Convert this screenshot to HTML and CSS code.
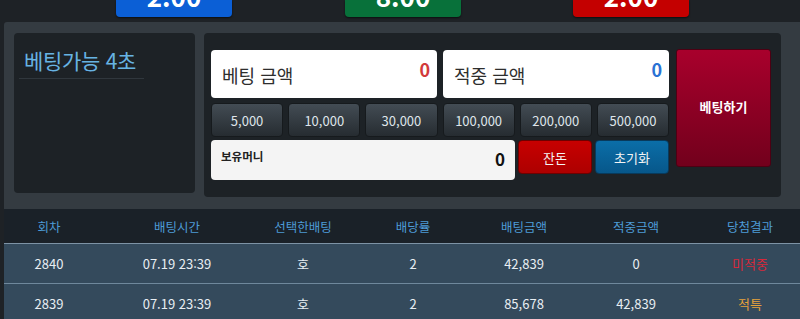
FILE: index.html
```html
<!DOCTYPE html>
<html lang="ko">
<head>
<meta charset="utf-8">
<link rel="stylesheet" href="styles.css">
</head>
<body>
<div class="top">
  <div class="odd odd-blue"><span>2.00</span></div>
  <div class="odd odd-green"><span>8.00</span></div>
  <div class="odd odd-red"><span>2.00</span></div>
</div>
<div class="panel">
  <div class="timer">
    <div class="timer-title">베팅가능 4초</div>
  </div>
  <div class="betbox">
    <div class="bet-left">
      <div class="amounts">
        <div class="amount"><span class="amount-label">베팅 금액</span><span class="amount-val red">0</span></div>
        <div class="amount"><span class="amount-label">적중 금액</span><span class="amount-val blue">0</span></div>
      </div>
      <div class="chips">
        <button class="chip">5,000</button>
        <button class="chip">10,000</button>
        <button class="chip">30,000</button>
        <button class="chip">100,000</button>
        <button class="chip">200,000</button>
        <button class="chip">500,000</button>
      </div>
      <div class="money-row">
        <div class="money"><span class="money-label">보유머니</span><span class="money-val">0</span></div>
        <button class="act act-red">잔돈</button>
        <button class="act act-blue">초기화</button>
      </div>
    </div>
    <button class="bet-btn">베팅하기</button>
  </div>
</div>
<div class="table">
  <div class="trow thead">
    <div>회차</div><div>배팅시간</div><div>선택한배팅</div><div>배당률</div><div>배팅금액</div><div>적중금액</div><div>당첨결과</div>
  </div>
  <div class="trow tbody">
    <div>2840</div><div>07.19 23:39</div><div>호</div><div>2</div><div>42,839</div><div>0</div><div class="lose">미적중</div>
  </div>
  <div class="trow tbody">
    <div>2839</div><div>07.19 23:39</div><div>호</div><div>2</div><div>85,678</div><div>42,839</div><div class="special">적특</div>
  </div>
</div>
</body>
</html>
```

FILE: styles.css
```css
* { box-sizing: border-box; }
html, body { margin: 0; padding: 0; }
body {
  background: #1e2226;
  font-family: "Noto Sans CJK KR", "Noto Sans", sans-serif;
  width: 800px;
  height: 319px;
  overflow: hidden;
}
button { font-family: inherit; cursor: pointer; }

.top {
  height: 22px;
  display: flex;
  padding-left: 116px;
}
.odd {
  width: 116px;
  height: 17px;
  border-radius: 0 0 4px 4px;
  overflow: hidden;
  text-align: center;
  color: #fff;
  font-weight: 700;
  font-size: 26px;
  box-shadow: 0 1px 2px rgba(0,0,0,0.6);
}
.odd span { display: block; line-height: 22px; margin-top: -15px; }
.odd-blue { background: #0b5fd6; }
.odd-green { background: #08713a; margin-left: 113px; }
.odd-red { background: #c40000; margin-left: 112px; }

.panel {
  margin-left: 4px;
  height: 187px;
  background: #343b41;
  display: flex;
  align-items: flex-start;
  padding: 11px 0 0 10px;
  gap: 9px;
  border-radius: 3px 0 0 0;
}
.timer {
  width: 181px;
  height: 160px;
  background: #1d2226;
  border-radius: 4px;
  padding: 10px 0 0 5px;
}
.timer-title {
  width: 125px;
  color: #67b3e3;
  font-size: 21px;
  line-height: 35px;
  padding-left: 5px;
  border-bottom: 1px solid #30373d;
  letter-spacing: -0.3px;
  white-space: nowrap;
}

.betbox {
  width: 577px;
  height: 164px;
  background: #1d2226;
  border-radius: 4px;
  display: flex;
  align-items: flex-start;
  padding: 17px 10px 0 7px;
  gap: 7px;
}
.bet-left {
  width: 458px;
  display: flex;
  flex-direction: column;
}
.amounts { display: flex; gap: 6px; }
.amount {
  flex: 1;
  height: 48px;
  background: #fff;
  border-radius: 4px;
  display: flex;
  justify-content: space-between;
  align-items: center;
  padding: 0 7px 0 11px;
}
.amount-label { font-size: 18px; color: #2e2e2e; line-height: 22px; margin-top: 2px; }
.amount-val { font-size: 18px; font-weight: 700; line-height: 22px; margin-top: -10px; }
.red { color: #d23a3a; }
.blue { color: #2a72d4; }

.chips {
  display: flex;
  gap: 5px;
  margin-top: 5px;
}
.chip {
  flex: 1;
  height: 34px;
  border: 1px solid #161a1d;
  border-radius: 4px;
  background: linear-gradient(#434c54, #262c31);
  color: #dfe5ea;
  font-size: 13px;
  padding: 0;
}

.money-row {
  display: flex;
  align-items: flex-start;
  gap: 3px;
  margin-top: 3px;
}
.money {
  width: 304px;
  height: 40px;
  background: #f4f4f4;
  border-radius: 4px;
  display: flex;
  justify-content: space-between;
  padding: 0 10px;
}
.money-label { font-size: 11.5px; font-weight: 700; color: #222; line-height: 14px; margin-top: 9px; }
.money-val { font-size: 17px; font-weight: 700; color: #111; line-height: 20px; margin-top: 9px; }
.act {
  width: 74px;
  height: 34px;
  border-radius: 4px;
  color: #f4f4f4;
  font-size: 13px;
  padding: 0;
}
.act-red { background: linear-gradient(#c70000, #ad0000); border: 1px solid #6e0000; }
.act-blue { background: linear-gradient(#0b6ea8, #07578a); border: 1px solid #083a5c; }

.bet-btn {
  width: 95px;
  height: 118px;
  margin-top: -1px;
  border: 1px solid #4d0013;
  border-radius: 3px;
  background: linear-gradient(#a8002c, #72001c);
  color: #fff;
  font-weight: 700;
  font-size: 13px;
  padding: 0 0 4px 0;
}

.table { margin-left: 4px; }
.trow {
  display: grid;
  grid-template-columns: 90px 166px 86px 134px 88px 136px 92px;
  text-align: center;
  align-items: center;
}
.thead {
  height: 35px;
  background: #1a2128;
  color: #4d9bd6;
  font-size: 12.5px;
  border-bottom: 1px solid #7d93a5;
}
.tbody {
  height: 40px;
  background: #344a5c;
  color: #e8eef3;
  font-size: 13px;
  border-bottom: 1px solid #6f889c;
}
.lose { color: #d8283a; }
.special { color: #e6a23a; }
```
